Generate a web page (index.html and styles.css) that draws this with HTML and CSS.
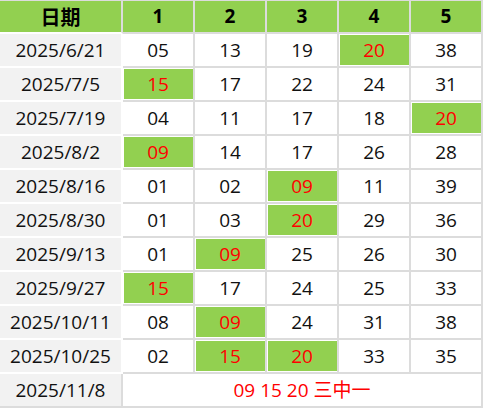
FILE: index.html
```html
<!DOCTYPE html>
<html>
<head>
<meta charset="utf-8">
<link rel="stylesheet" href="styles.css">
</head>
<body>
<div class="table">
  <div class="cell head date"><span class="cjk">日期</span></div>
  <div class="cell head">1</div>
  <div class="cell head">2</div>
  <div class="cell head">3</div>
  <div class="cell head">4</div>
  <div class="cell head">5</div>

  <div class="cell date">2025/6/21</div>
  <div class="cell">05</div><div class="cell">13</div><div class="cell">19</div><div class="cell hit">20</div><div class="cell">38</div>

  <div class="cell date">2025/7/5</div>
  <div class="cell hit">15</div><div class="cell">17</div><div class="cell">22</div><div class="cell">24</div><div class="cell">31</div>

  <div class="cell date">2025/7/19</div>
  <div class="cell">04</div><div class="cell">11</div><div class="cell">17</div><div class="cell">18</div><div class="cell hit">20</div>

  <div class="cell date">2025/8/2</div>
  <div class="cell hit">09</div><div class="cell">14</div><div class="cell">17</div><div class="cell">26</div><div class="cell">28</div>

  <div class="cell date">2025/8/16</div>
  <div class="cell">01</div><div class="cell">02</div><div class="cell hit">09</div><div class="cell">11</div><div class="cell">39</div>

  <div class="cell date">2025/8/30</div>
  <div class="cell">01</div><div class="cell">03</div><div class="cell hit">20</div><div class="cell">29</div><div class="cell">36</div>

  <div class="cell date">2025/9/13</div>
  <div class="cell">01</div><div class="cell hit">09</div><div class="cell">25</div><div class="cell">26</div><div class="cell">30</div>

  <div class="cell date">2025/9/27</div>
  <div class="cell hit">15</div><div class="cell">17</div><div class="cell">24</div><div class="cell">25</div><div class="cell">33</div>

  <div class="cell date">2025/10/11</div>
  <div class="cell">08</div><div class="cell hit">09</div><div class="cell">24</div><div class="cell">31</div><div class="cell">38</div>

  <div class="cell date">2025/10/25</div>
  <div class="cell">02</div><div class="cell hit">15</div><div class="cell hit">20</div><div class="cell">33</div><div class="cell">35</div>

  <div class="cell date last">2025/11/8</div>
  <div class="cell result last">09 15 20 三中一</div>
</div>
</body>
</html>
```

FILE: styles.css
```css
html, body {
  margin: 0;
  padding: 0;
  background: #fff;
}

.table {
  display: grid;
  grid-template-columns: 123px repeat(5, 72px);
  grid-auto-rows: 34px;
  width: 483px;
  font-family: "Open Sans", "Noto Sans", "Noto Sans CJK SC", sans-serif;
  font-size: 19px;
  color: #111;
}

.cell {
  box-sizing: border-box;
  display: flex;
  align-items: center;
  justify-content: center;
  background: #fff;
  border-right: 2px solid #dcdcdc;
  border-bottom: 2px solid #dcdcdc;
  line-height: 1;
}

.head {
  background: #92d050;
  font-weight: bold;
  color: #000;
  border-top: 1px solid #dcdcdc;
}

.cjk {
  font-family: "Noto Sans CJK SC", sans-serif;
  font-size: 20px;
}

.date {
  background: #f2f2f2;
  border-right-color: #fff;
  border-bottom-color: #fff;
}

.head.date {
  background: #92d050;
  border-right-color: #dcdcdc;
}

.hit {
  background: #92d050;
  color: #ff0000;
  box-shadow: inset 1px 1px 0 #fff, inset 0 -1px 0 #fff;
}

.date.last {
  border-right-color: #dcdcdc;
  border-bottom-color: #dcdcdc;
}

.result {
  grid-column: span 5;
  color: #ff0000;
  font-family: "Open Sans", "Noto Sans CJK SC", sans-serif;
}
```
